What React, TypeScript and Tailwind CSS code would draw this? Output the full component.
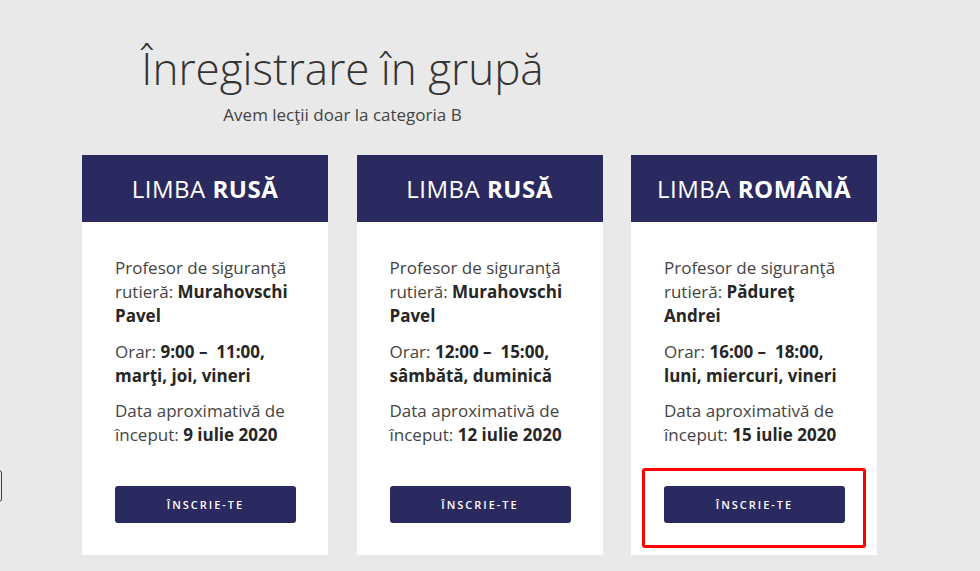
import React from "react"

type Group = {
  limba: string
  profesor: string
  ore: string
  zile: string
  data: string
}

const GROUPS: Group[] = [
  { limba: "RUSĂ", profesor: "Murahovschi Pavel", ore: "9:00 –\u00a0 11:00,", zile: "marţi, joi, vineri", data: "9 iulie 2020" },
  { limba: "RUSĂ", profesor: "Murahovschi Pavel", ore: "12:00 –\u00a0 15:00,", zile: "sâmbătă, duminică", data: "12 iulie 2020" },
  { limba: "ROMÂNĂ", profesor: "Pădureţ Andrei", ore: "16:00 –\u00a0 18:00,", zile: "luni, miercuri, vineri", data: "15 iulie 2020" },
]

function GroupCard({ group, highlighted }: { group: Group; highlighted?: boolean }) {
  return (
    <div className="w-[246px] bg-white flex flex-col">
      {/* Header */}
      <div className="h-[67px] bg-[#2b2a60] flex items-center justify-center">
        <h2 className="text-[24px] text-white tracking-[0.5px] leading-none">
          LIMBA <span className="font-bold">{group.limba}</span>
        </h2>
      </div>

      {/* Body */}
      <div className="px-[33px] pt-[34px] pb-[32px] text-[17px] leading-[24px] text-[#444444]">
        <p>
          Profesor de siguranţă rutieră: <span className="font-bold text-[#262626]">{group.profesor}</span>
        </p>
        <p className="mt-[12px]">
          Orar: <span className="font-bold text-[#262626]">{group.ore} {group.zile}</span>
        </p>
        <p className="mt-[11px]">
          Data aproximativă de început: <span className="font-bold text-[#262626]">{group.data}</span>
        </p>

        <div className="relative mt-[39px]">
          <button className="w-[181px] h-[37px] rounded-[3px] bg-[#2b2a60] text-white text-[11px] font-semibold tracking-[2px]">
            ÎNSCRIE-TE
          </button>
          {highlighted && (
            <div className="absolute left-[-22px] top-[-18px] w-[224px] h-[80px] border-[3px] border-[#ff0000] rounded-[3px]" />
          )}
        </div>
      </div>
    </div>
  )
}

export default function App() {
  return (
    <div
      className="relative w-[980px] h-[571px] overflow-hidden bg-[#e9e9e9]"
      style={{ fontFamily: '"Open Sans", "Liberation Sans", sans-serif' }}
    >
      {/* Side tab peeking in from the left */}
      <div className="absolute left-[-20px] top-[470px] w-[22px] h-[32px] rounded-[3px] border-[1.5px] border-[#3b3a6c]" />

      <div className="pl-[82px] pt-[42px]">
        <div className="w-[521px] flex flex-col items-center">
          <h1 className="text-[44px] leading-[52px] font-light text-[#333333]">Înregistrare în grupă</h1>
          <p className="mt-[9px] text-[17px] leading-[24px] text-[#444444]">Avem lecţii doar la categoria B</p>
        </div>

        <div className="mt-[28px] flex gap-[28.5px] items-start">
          {GROUPS.map((g, i) => (
            <GroupCard key={i} group={g} highlighted={i === 2} />
          ))}
        </div>
      </div>
    </div>
  )
}
